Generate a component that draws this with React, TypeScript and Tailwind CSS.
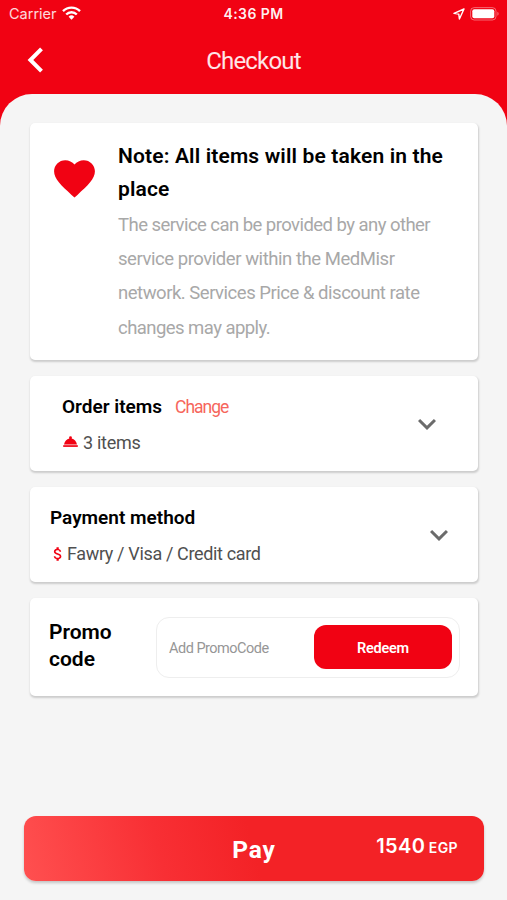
import type { ReactNode } from 'react';
import { clsx } from 'clsx';
import { MdAttachMoney, MdExpandMore, MdFavorite } from 'react-icons/md';

interface CardProps {
  children: ReactNode;
  className?: string;
}

const Card = ({ children, className }: CardProps) => (
  <section className={clsx('flex rounded-[5px] bg-white shadow-[0.5px_1.5px_2px_rgba(0,0,0,0.17)]', className)}>
    {children}
  </section>
);

const ServiceBell = () => (
  <svg width="15" height="12" viewBox="0 0 15 12" fill="#f10213" className="mb-px ml-px">
    <path d="M6.1 1.6a1.4 1.4 0 0 1 2.8 0l-.2.8c2.7.6 4.6 2.8 5.3 6H1c.7-3.2 2.6-5.4 5.3-6z" />
    <path d="M.2 9.2h14.6v1.7H.2z" />
  </svg>
);

const StatusBar = () => (
  <div className="grid h-7 grid-cols-3 items-center pr-[7px] pl-[9px] font-['Inter',sans-serif] text-white">
    <div className="flex items-center gap-[6px]">
      <span className="text-[14.5px] text-white/85">Carrier</span>
      <svg width="19" height="14" viewBox="0 0 19 14" fill="none" stroke="currentColor" strokeWidth="2.4" className="-ml-px -mt-[2px]">
        <path d="M1 5.2a12 12 0 0 1 17 0" />
        <path d="M4.2 8.5a7.5 7.5 0 0 1 10.6 0" />
        <path d="M6.6 10.8a4.1 4.1 0 0 1 5.8 0L9.5 13.8z" fill="currentColor" stroke="none" />
      </svg>
    </div>
    <span className="-ml-[2px] pb-px text-center text-[14px] font-semibold tracking-[0.4px] whitespace-nowrap text-white/95">4:36 PM</span>
    <div className="flex items-center justify-end gap-[5px] pb-px">
      <svg width="12" height="12" viewBox="0 0 12 12" fill="none" stroke="currentColor" strokeWidth="1.4" strokeLinejoin="round">
        <path d="M11 1 1 5.4l4.8.7.6 4.9z" />
      </svg>
      <svg width="30" height="14" viewBox="0 0 30 14" fill="none">
        <rect x=".6" y=".6" width="25.4" height="12.4" rx="3.6" stroke="white" strokeOpacity=".4" />
        <rect x="2.3" y="2.3" width="22" height="9" rx="2" fill="white" />
        <path d="M27.4 4.8v4c1.6-.6 1.6-3.4 0-4z" fill="white" fillOpacity=".45" />
      </svg>
    </div>
  </div>
);

const Header = () => (
  <header className="grid h-[66px] grid-cols-[1fr_auto_1fr] items-center pb-[2px] text-white">
    <button type="button" aria-label="Back" className="ml-[27px] w-4">
      <svg width="16" height="26" viewBox="0 0 16 26" fill="none" stroke="currentColor" strokeWidth="4">
        <path d="M14.5 1.8 3.4 13l11.1 11.2" />
      </svg>
    </button>
    <h1 className="pt-[2px] text-[24px] font-normal tracking-[-0.8px] text-white/90">Checkout</h1>
  </header>
);

export default function App() {
  return (
    <div className="h-[900px] w-[507px] overflow-hidden bg-[#f10213] font-['Roboto','Open_Sans',sans-serif] text-black">
      <StatusBar />
      <Header />
      <main className="flex h-[806px] flex-col rounded-t-[32px] bg-[#f5f5f5] pt-[29px]">
        <div className="mr-[29px] ml-[30px] flex flex-col gap-4">
          <Card className="h-[237px]">
            <div className="w-[88px] shrink-0 pt-[31px] pl-5 text-[#f10213]">
              <MdFavorite size={49} />
            </div>
            <div className="pt-[17px] whitespace-nowrap">
              <h2 className="text-[21px] leading-[33px] font-semibold tracking-[0.15px]">
                Note: All items will be taken in the
                <br />
                place
              </h2>
              <p className="mt-[2px] text-[18.5px] leading-[34.2px] font-normal tracking-[-0.55px] text-[#a8a8a8]">
                The service can be provided by any other
                <br />
                <span className="tracking-[-0.45px]">service provider within the MedMisr</span>
                <br />
                <span className="tracking-[-0.48px]">network. Services Price &amp; discount rate</span>
                <br />
                changes may apply.
              </p>
            </div>
          </Card>

          <Card className="h-[95px] items-center justify-between pr-[33px] pl-8">
            <div className="pt-[2px]">
              <div className="flex items-center gap-[13px] leading-9">
                <h3 className="text-[19px] font-semibold">Order items</h3>
                <a className="text-[17.5px] font-normal tracking-[-1px] text-[#f6665c]">Change</a>
              </div>
              <p className="flex items-center gap-[5px] text-[18px] leading-9 font-normal tracking-[-0.3px] text-[#505050]">
                <ServiceBell />
                3 items
              </p>
            </div>
            <MdExpandMore size={36} className="text-[#6b6b6b]" />
          </Card>

          <Card className="h-[95px] items-center justify-between pr-[21px] pl-5">
            <div className="pt-[2px]">
              <h3 className="text-[19px] leading-9 font-semibold">Payment method</h3>
              <p className="flex items-center text-[18px] leading-9 font-normal tracking-[-0.35px] text-[#505050]">
                <MdAttachMoney size={18} className="-ml-px text-[#f10213]" />
                Fawry / Visa / Credit card
              </p>
            </div>
            <MdExpandMore size={36} className="text-[#6b6b6b]" />
          </Card>

          <Card className="h-[98px] items-center pr-[18px] pl-[19px]">
            <h3 className="w-[107px] pb-[3px] text-[21px] leading-[27px] font-semibold">
              Promo
              <br />
              code
            </h3>
            <div className="flex h-[61px] flex-1 items-center justify-between rounded-[13px] border border-[#eee] pr-[7px] pl-3">
              <span className="pt-[3px] text-[14.5px] font-normal tracking-[-0.5px] text-[#969696]">Add PromoCode</span>
              <button
                type="button"
                className="h-11 w-[138px] rounded-[12px] bg-[#f10213] pt-[3px] text-[14.5px] font-semibold tracking-[-0.25px] text-white"
              >
                Redeem
              </button>
            </div>
          </Card>
        </div>

        <button
          type="button"
          className="mt-auto mr-[23px] mb-[19px] ml-6 grid h-[65px] grid-cols-3 items-center rounded-[12px] bg-[linear-gradient(75deg,#ff5050_0%,#f82f34_30%,#f32226_50%,#f32226_100%)] text-white shadow-[0_2px_3px_rgba(0,0,0,0.2)]"
        >
          <span className="col-start-2 pt-[3px] text-[24.5px] font-bold tracking-[0.8px]">Pay</span>
          <span className="pr-[26px] pb-[5px] text-right font-['Inter',sans-serif] text-[20px] font-semibold tracking-[0.4px] whitespace-nowrap">
            1540 <span className="-ml-[2px] text-[14px]">EGP</span>
          </span>
        </button>
      </main>
    </div>
  );
}
